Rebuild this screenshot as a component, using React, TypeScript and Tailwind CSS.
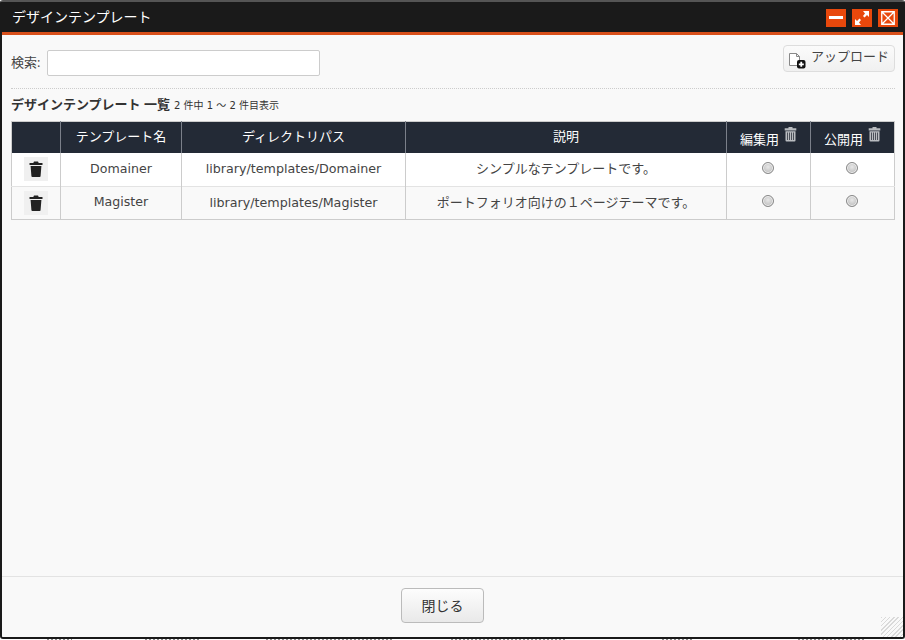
import React from "react";

const TrashSolid = () => (
  <svg width="14" height="16" viewBox="0 0 14 16" aria-hidden="true">
    <path d="M5 0.5h4l.7 1.500H13.500v2H.5V2h3.800z" fill="#222" />
    <path d="M1.600 5h10.800l-.8 10a1 1 0 0 1-1 1H3.400a1 1 0 0 1-1-1z" fill="#222" />
  </svg>
);
const TrashHead = () => (
  <svg width="13" height="15" viewBox="0 0 13 15" aria-hidden="true" className="absolute top-[1px] right-[0px]">
    <path d="M4.500 0h4v1.200h3.800v2.200H.7V1.200h3.800z" fill="#b9bcc0" />
    <path d="M1.500 4.200h10v9.300a1 1 0 0 1-1 1h-8a1 1 0 0 1-1-1z" fill="#b9bcc0" />
    <path d="M3.500 5.500v7.500M5.500 5.500v7.500M7.500 5.500v7.500M9.500 5.500v7.500" stroke="#4a4f58" strokeWidth="1" />
  </svg>
);
const Radio = () => (
  <span className="inline-block w-[12px] h-[12px] rounded-full border border-[#8a8a8a] bg-[radial-gradient(circle_at_50%_40%,#e8e8e8,#b0b0b0)] shadow-[inset_0_0_0_1px_#f0f0f0]" />
);
const Win = ({ children }: { children: React.ReactNode }) => (
  <span className="w-[20px] h-[18px] bg-[#e8480c] flex items-center justify-center">{children}</span>
);

const rows = [
  ["Domainer", "library/templates/Domainer", "シンプルなテンプレートです。"],
  ["Magister", "library/templates/Magister", "ポートフォリオ向けの１ページテーマです。"],
];

const marks = [
  "ml-[47px] w-[25px]",
  "ml-[73px] w-[55px]",
  "ml-[66px] w-[127px]",
  "ml-[58px] w-[116px]",
  "ml-[95px] w-[32px]",
  "ml-[104px] w-[67px]",
];

export default function App() {
  return (
    <div className="h-[640px] w-[905px] overflow-hidden bg-white font-['Open_Sans','Noto_Sans_CJK_JP',sans-serif] text-[13px] text-[#333]">
      <div className="h-[639px] flex flex-col border-x-[2px] border-b-[2px] border-t-[2px] border-x-[#1a1a1a] border-b-[#1a1a1a] border-t-[#555] rounded-[3px] bg-[#f9f9f9] relative">
        <header className="h-[33px] shrink-0 bg-[#1a1a1a] border-b-[3px] border-[#d9501b] flex items-center pl-[10px] pr-[5px] justify-between">
          <span className="text-white text-[14px] leading-none pb-[1px]">デザインテンプレート</span>
          <div className="flex gap-[6px] mt-[1px]">
            <Win><span className="w-[14px] h-[3px] bg-white" /></Win>
            <Win>
              <svg width="16" height="16" viewBox="0 0 16 16"><path d="M9 1h6v6l-2-2-2.500 2.500-1.500-1.500L11 3.500zM7 15H1V9l2 2 2.500-2.500 1.500 1.500L5 12.500z" fill="#fff" /></svg>
            </Win>
            <Win>
              <svg width="14" height="14" viewBox="0 0 14 14"><path d="M.75.75h12.500v12.500H.75zM1 1l12 12M13 1 1 13" fill="none" stroke="#fff" strokeWidth="1.300" /></svg>
            </Win>
          </div>
        </header>

        <main className="flex-1 pl-[9px] pr-[8px] min-h-0">
          <div className="flex justify-between items-start pt-[10px] h-[54px] border-b border-dotted border-[#ccc]">
            <label className="flex items-center gap-[7px] pt-[5px]">
              <span className="text-[#444] leading-none pb-[2px]">検索:</span>
              <span className="block w-[273px] h-[26px] bg-white border border-[#ccc] rounded-[2px]" />
            </label>
            <button className="w-[112px] h-[27px] flex items-center justify-start gap-[5px] border border-[#ddd] rounded-[4px] bg-gradient-to-b from-[#fbfbfb] to-[#f0f0f0] text-[#444] pl-[4px]">
              <svg width="18" height="16" viewBox="0 0 18 16" className="mt-[5px]">
                <path d="M1.500.5h7l3 3v9h-10z M8.500.5v3h3" fill="#fff" stroke="#888" strokeWidth="1" />
                <rect x="9" y="7" width="8.500" height="8.500" rx="2" fill="#111" />
                <path d="M13.250 8.800v5M10.800 11.300h5" stroke="#fff" strokeWidth="1.800" />
              </svg>
              <span className="pb-[3px]">アップロード</span>
            </button>
          </div>

          <div className="flex items-baseline gap-[4px] h-[32px] pt-[6px]">
            <strong className="font-bold text-[#333] text-[13px]">デザインテンプレート 一覧</strong>
            <span className="text-[10px] text-[#333] font-['DejaVu_Sans','Noto_Sans_CJK_JP',sans-serif]">2 件中 1 ～ 2 件目表示</span>
          </div>

          <table className="w-[883px] table-fixed border-collapse border border-[#ccc] bg-white">
            <colgroup>
              <col className="w-[49px]" />
              <col className="w-[121px]" />
              <col className="w-[224px]" />
              <col className="w-[321px]" />
              <col className="w-[84px]" />
              <col className="w-[84px]" />
            </colgroup>
            <thead>
              <tr className="h-[31px] bg-[#232a36] text-white">
                {["", "テンプレート名", "ディレクトリパス", "説明"].map((t, i) => (
                  <th key={i} className="font-normal text-[13px] border-x border-[#7b808a] first:border-l-0 p-0 pb-[2px]">{t}</th>
                ))}
                {["編集用", "公開用"].map((t) => (
                  <th key={t} className="font-normal text-[13px] border-x border-[#7b808a] last:border-r-0 p-0">
                    <span className="relative inline-block pr-[18px] pt-[4px]">{t}<TrashHead /></span>
                  </th>
                ))}
              </tr>
            </thead>
            <tbody>
              {rows.map((r) => (
                <tr key={r[0]} className="h-[33.500px] border-t border-[#e3e3e3] first:border-t-0 odd:bg-white even:bg-[#f9f9f9]">
                  <td className="border-r border-[#ccc] p-0">
                    <span className="mx-auto w-[24px] h-[24px] bg-[#f0f0f0] flex items-center justify-center"><TrashSolid /></span>
                  </td>
                  <td className="border-r border-[#ccc] text-center p-0 text-[#444] text-[12.600px] font-['DejaVu_Sans',sans-serif]">{r[0]}</td>
                  <td className="border-r border-[#ccc] text-center p-0 text-[#444] text-[12.700px] font-['DejaVu_Sans',sans-serif]">{r[1]}</td>
                  <td className="border-r border-[#ccc] text-center p-0 text-[#444]">{r[2]}</td>
                  <td className="border-r border-[#ccc] text-center p-0 pr-[1px] leading-none pb-[1px]"><Radio /></td>
                  <td className="text-center p-0 pr-[1px] leading-none pb-[1px]"><Radio /></td>
                </tr>
              ))}
            </tbody>
          </table>
        </main>

        <footer className="h-[61px] shrink-0 border-t border-[#e3e3e3] flex justify-center pt-[11px] pr-[20px]">
          <button className="w-[83px] h-[35px] border border-[#bbb] rounded-[4px] bg-gradient-to-b from-[#fdfdfd] to-[#e9e9e9] text-[#333] text-[14px]">閉じる</button>
        </footer>
        <span className="absolute right-0 bottom-0 w-[22px] h-[20px] bg-[repeating-linear-gradient(135deg,#d9d9d9_0,#d9d9d9_1px,#f9f9f9_1px,#f9f9f9_3px)]" />
      </div>
      <div className="flex h-[1px]">
        {marks.map((m) => (
          <span key={m} className={`${m} h-[1px] bg-[repeating-linear-gradient(90deg,#8a8a8a_0,#8a8a8a_2px,#ffffff_2px,#ffffff_4px)]`} />
        ))}
      </div>
    </div>
  );
}
